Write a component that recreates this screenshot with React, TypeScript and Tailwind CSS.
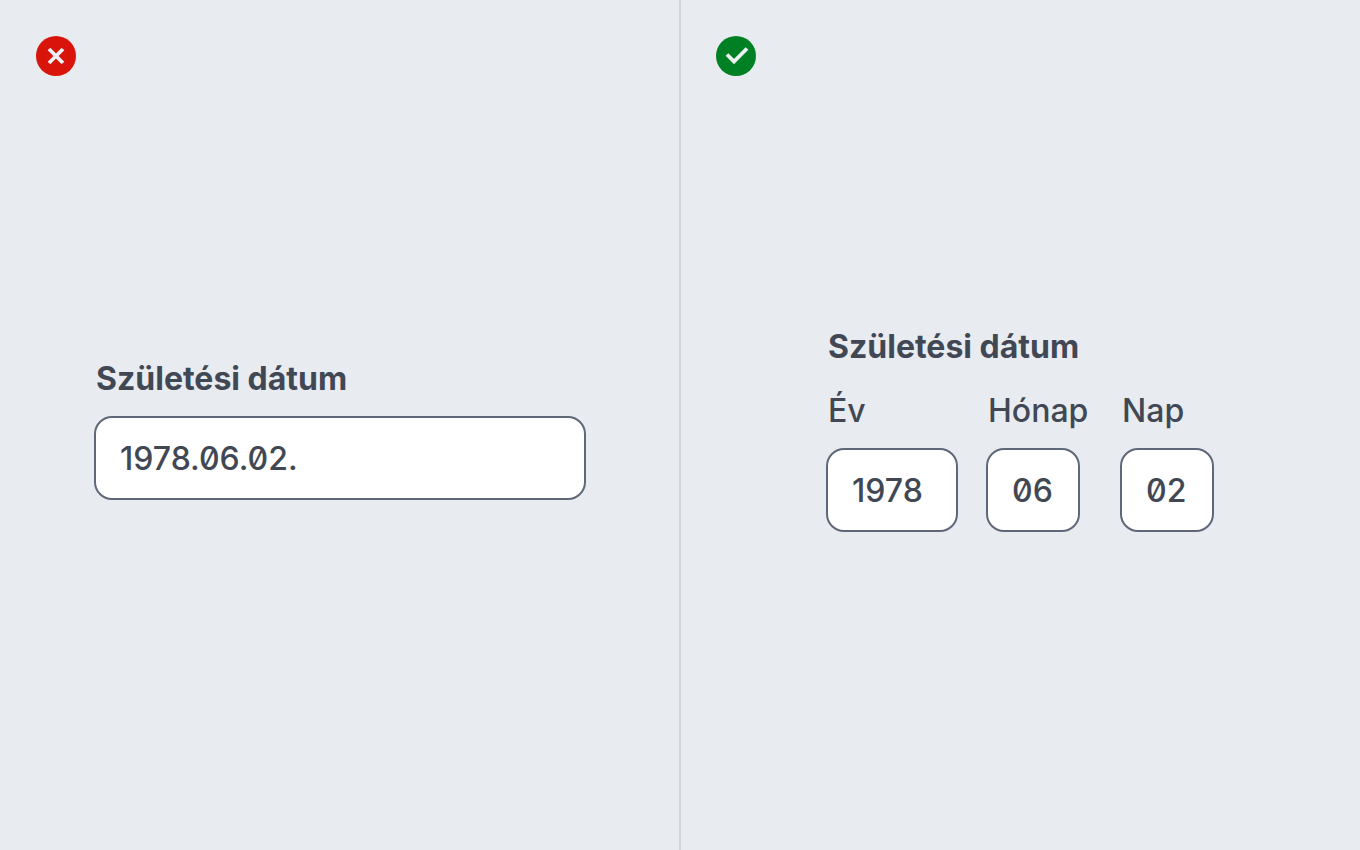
import { useState } from "react";
import type { ReactNode } from "react";

type FieldProps = {
  id: string;
  label: string;
  value: string;
  onChange: (value: string) => void;
  labelClass?: string;
  inputClass: string;
};

export default function App() {
  const [date, setDate] = useState("1978.06.02.");
  const [year, setYear] = useState("1978");
  const [month, setMonth] = useState("06");
  const [day, setDay] = useState("02");

  return (
    <main className="relative grid min-h-screen grid-cols-2 bg-[#e8ecf1] font-['Inter',sans-serif] text-[32px] leading-[50px] text-[#414854]">
      <Panel icon={<WrongIcon />}>
        <div className="w-[492px]">
          <Field
            id="birth-date"
            label="Születési dátum"
            value={date}
            onChange={setDate}
            labelClass="font-bold"
            inputClass="w-full"
          />
        </div>
      </Panel>

      <div className="absolute inset-y-0 left-1/2 w-0.5 -translate-x-1/2 bg-[#d0d5db]" />

      <Panel icon={<RightIcon />}>
        <fieldset>
          <legend className="px-0.5 font-bold">Születési dátum</legend>
          <div className="mt-3.5 flex">
            <Field
              id="year"
              label="Év"
              value={year}
              onChange={setYear}
              inputClass="mr-7 w-[132px]"
            />
            <Field
              id="month"
              label="Hónap"
              value={month}
              onChange={setMonth}
              inputClass="mr-10 w-[94px]"
            />
            <Field
              id="day"
              label="Nap"
              value={day}
              onChange={setDay}
              inputClass="w-[94px]"
            />
          </div>
        </fieldset>
      </Panel>
    </main>
  );
}

function Panel({ icon, children }: { icon: ReactNode; children: ReactNode }) {
  return (
    <section className="relative flex items-center justify-center pt-1">
      <div className="absolute left-9 top-9">{icon}</div>
      {children}
    </section>
  );
}

function Field({
  id,
  label,
  value,
  onChange,
  labelClass = "font-medium",
  inputClass,
}: FieldProps) {
  return (
    <div className="flex flex-col">
      <label htmlFor={id} className={`mb-3 px-0.5 ${labelClass}`}>
        {label}
      </label>
      <input
        id={id}
        type="text"
        inputMode="numeric"
        value={value}
        onChange={(event) => onChange(event.target.value)}
        className={`h-21 rounded-[18px] border-2 border-[#5f6878] bg-white px-6 font-medium slashed-zero outline-none focus:ring-4 focus:ring-blue-300 ${inputClass}`}
      />
    </div>
  );
}

function WrongIcon() {
  return (
    <svg viewBox="0 0 40 40" className="size-10" role="img" aria-label="Helytelen">
      <circle cx="20" cy="20" r="20" fill="#d9150b" />
      <path d="M13 13L27 27M27 13L13 27" stroke="#eef1f4" strokeWidth="3.8" fill="none" />
    </svg>
  );
}

function RightIcon() {
  return (
    <svg viewBox="0 0 40 40" className="size-10" role="img" aria-label="Helyes">
      <circle cx="20" cy="20" r="20" fill="#008024" />
      <path d="M11 18.5L18 25.5L31 12.5" stroke="#eef1f4" strokeWidth="3.8" fill="none" />
    </svg>
  );
}
